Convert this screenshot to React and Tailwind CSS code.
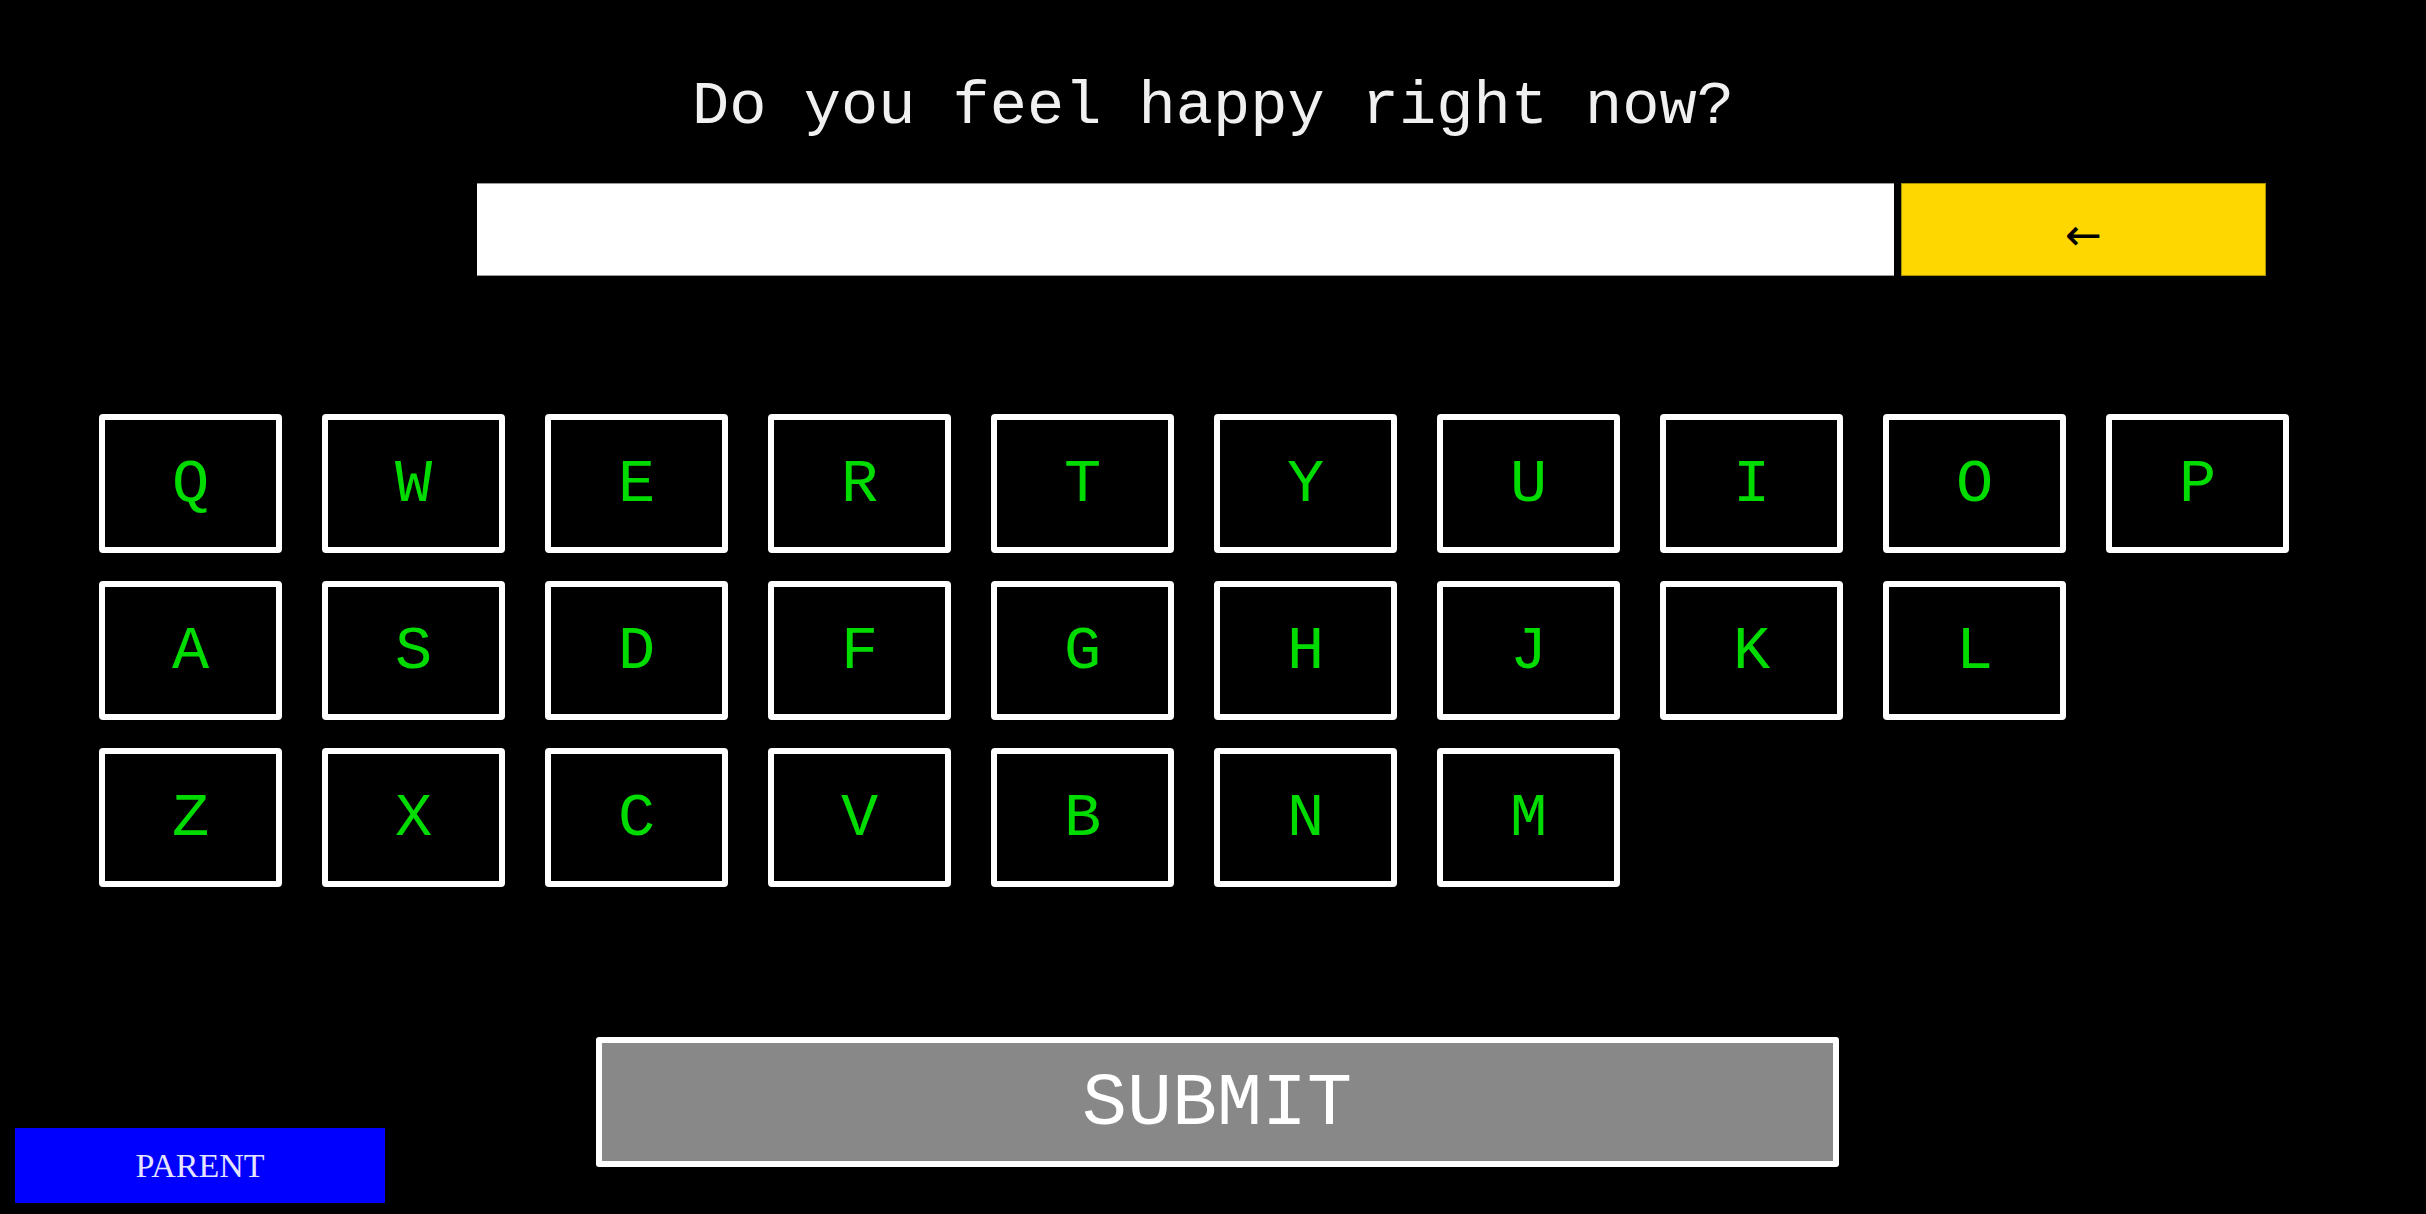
import React from "react";

const rows = [
  ["Q", "W", "E", "R", "T", "Y", "U", "I", "O", "P"],
  ["A", "S", "D", "F", "G", "H", "J", "K", "L"],
  ["Z", "X", "C", "V", "B", "N", "M"],
];

function Key({ label }) {
  return (
    <button className="w-[183px] h-[139px] border-[6px] border-white rounded-[4px] bg-black flex items-center justify-center pt-[2px] text-[#00dc00] text-[62px] leading-none font-['Liberation_Mono',monospace]">
      {label}
    </button>
  );
}

export default function App() {
  return (
    <div className="w-[2426px] h-[1214px] bg-black overflow-hidden relative font-['Liberation_Mono',monospace]">
      <div className="pt-[76px] text-center text-[#f0f0f0] text-[62px] leading-none h-[140px]">
        Do you feel happy right now?
      </div>
      <div className="mt-[43px] flex pl-[477px] gap-[7px] h-[93px]">
        <div className="w-[1417px] h-full bg-white border-y border-[#9a9a9a]"></div>
        <button className="w-[365px] h-full bg-[#ffd700] border border-[#a89000] flex items-center justify-center pt-[10px] text-black text-[44px] leading-none font-['DejaVu_Sans',sans-serif]">
          ←
        </button>
      </div>
      <div className="mt-[138px] pl-[99px] flex flex-col gap-[28px]">
        {rows.map((row, i) => (
          <div key={i} className="flex gap-[40px]">
            {row.map((k) => (
              <Key key={k} label={k} />
            ))}
          </div>
        ))}
      </div>
      <div className="mt-[150px] flex justify-center">
        <button className="ml-[8px] w-[1243px] h-[130px] bg-[#888888] border-[6px] border-white rounded-[3px] flex items-center justify-center pt-[5px] text-white text-[75px] leading-none">
          SUBMIT
        </button>
      </div>
      <button className="fixed left-[15px] bottom-[11px] w-[370px] h-[75px] bg-[#0000ff] text-[#e4e4ff] text-[34px] leading-none flex items-center justify-center font-['Liberation_Serif',serif]">
        PARENT
      </button>
    </div>
  );
}
